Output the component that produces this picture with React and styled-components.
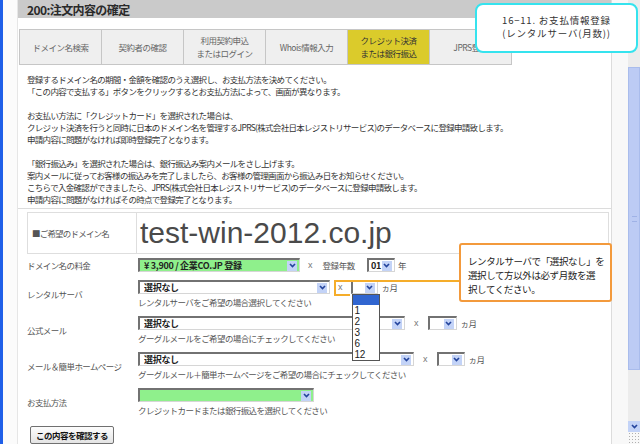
import React from "react";
import styled, { createGlobalStyle } from "styled-components";

const GlobalStyle = createGlobalStyle`
  html, body {
    margin: 0;
    padding: 0;
    background: #fff;
  }
  body {
    font-family: "Noto Sans CJK JP", "Liberation Sans", sans-serif;
  }
`;

const Page = styled.div`
  position: relative;
  display: flex;
  width: 640px;
  height: 444px;
  overflow: hidden;
  background: #fff;
  font-family: "Noto Sans CJK JP", "Liberation Sans", sans-serif;
`;

const BlueEdge = styled.div`
  width: 3px;
  flex: 0 0 3px;
  background: #1f5fe8;
`;

const Gutter = styled.div`
  flex: 0 0 15px;
  background: #fbfbfb;
  box-sizing: border-box;
  border-right: 1px solid #e6e6e6;
`;

const Panel = styled.div`
  flex: 0 0 594px;
  display: flex;
  flex-direction: column;
  box-sizing: border-box;
  border-right: 1px solid #dcdcdc;
`;

const Header = styled.div`
  height: 23px;
  background: #cacaca;
  padding-left: 9px;
  display: flex;
  align-items: center;
  font-size: 12px;
  font-weight: 700;
  letter-spacing: -0.6px;
  color: #2a2a2a;
`;

const TabRow = styled.div`
  display: flex;
  margin: 11px 0 0 1px;
`;

const Tab = styled.div`
  width: 83px;
  height: 36px;
  box-sizing: border-box;
  margin-left: -1px;
  border: 1px solid #c6c6c6;
  background: ${(p) => (p.$active ? "#dbcb2b" : "#efefef")};
  color: ${(p) => (p.$active ? "#333" : "#666")};
  display: flex;
  flex-direction: column;
  align-items: center;
  justify-content: center;
  font-size: 8.5px;
  line-height: 13px;
  letter-spacing: -0.5px;
  &:first-child {
    margin-left: 0;
  }
`;

const Notes = styled.div`
  padding: 8px 9px 3px;
  font-size: 8.5px;
  line-height: 12px;
  letter-spacing: -0.7px;
  color: #333;
  white-space: nowrap;
  p {
    margin: 0 0 12px;
  }
  p:last-child {
    margin: 0;
  }
`;

const FormSection = styled.div`
  border-top: 1px solid #dcdcdc;
  padding: 3px 2px 0 9px;
`;

const DomainBox = styled.div`
  display: flex;
  height: 42px;
  box-sizing: border-box;
  border: 1px solid #dedede;
`;

const DomainLabel = styled.div`
  width: 109px;
  box-sizing: border-box;
  border-right: 1px solid #dedede;
  padding-left: 4px;
  display: flex;
  align-items: center;
  font-size: 8.5px;
  letter-spacing: -0.8px;
  color: #555;
`;

const DomainName = styled.div`
  padding-left: 3px;
  display: flex;
  align-items: center;
  font-family: "Liberation Sans", sans-serif;
  font-size: 30px;
  color: #4a4a4a;
  letter-spacing: 0;
`;

const FieldRow = styled.div`
  display: grid;
  grid-template-columns: 111px 1fr;
  padding: 4px 0;
`;

const FieldLabel = styled.div`
  align-self: center;
  font-size: 8.5px;
  letter-spacing: -0.6px;
  color: #555;
  white-space: nowrap;
`;

const FieldBody = styled.div`
  display: flex;
  flex-direction: column;
  gap: 2px;
`;

const ControlLine = styled.div`
  display: flex;
  align-items: center;
  height: 14px;
`;

const Select = styled.div`
  position: relative;
  display: flex;
  align-items: center;
  width: ${(p) => p.$w}px;
  height: 14px;
  box-sizing: border-box;
  background: ${(p) => (p.$green ? "#8ff08c" : "#fff")};
  border-top: 2px solid #727272;
  border-left: 2px solid #727272;
  border-right: 1px solid #d6d6d6;
  border-bottom: 1px solid #d6d6d6;
  padding-left: ${(p) => (p.$tight ? 2 : 4)}px;
  font-size: 9px;
  font-weight: 700;
  letter-spacing: -0.3px;
  color: #222;
`;

const SelectText = styled.span`
  flex: 1;
  white-space: nowrap;
  overflow: hidden;
  line-height: 12px;
`;

const ArrowBox = styled.span`
  width: 10px;
  height: 10px;
  flex: 0 0 10px;
  margin-right: 2px;
  background: #c3d3f7;
  display: flex;
  align-items: center;
  justify-content: center;
`;

const Times = styled.span`
  margin: 0 ${(p) => p.$gap || 9}px;
  font-family: "Liberation Sans", sans-serif;
  font-size: 9px;
  color: #777;
`;

const Unit = styled.span`
  margin-left: ${(p) => p.$gap ?? 4}px;
  margin-right: ${(p) => p.$after || 0}px;
  font-size: 8.5px;
  letter-spacing: -0.4px;
  color: #555;
  white-space: nowrap;
`;

const Helper = styled.div`
  font-size: 8.5px;
  line-height: 12px;
  letter-spacing: -0.6px;
  color: #555;
  white-space: nowrap;
`;

const Dropdown = styled.div`
  position: absolute;
  top: 12px;
  left: -1px;
  width: 28px;
  box-sizing: border-box;
  border: 1px solid #555;
  background: #fff;
  z-index: 3;
`;

const DropItem = styled.div`
  height: ${(p) => (p.$selected ? 10 : 11)}px;
  line-height: 11px;
  padding-left: 2px;
  font-family: "Liberation Sans", sans-serif;
  font-size: 10px;
  font-weight: 400;
  color: #222;
  background: ${(p) => (p.$selected ? "#3065d0" : "#fff")};
`;

const ConfirmButton = styled.button`
  margin: 2px 0 0 3px;
  width: 84px;
  height: 18px;
  padding: 0;
  border: 1px solid #707070;
  border-radius: 2px;
  background: linear-gradient(#fdfdfd, #e4e4e4);
  font-family: "Noto Sans CJK JP", sans-serif;
  font-size: 8.5px;
  font-weight: 700;
  letter-spacing: -0.5px;
  color: #111;
  text-align: center;
`;

const ScrollBar = styled.div`
  flex: 1;
  display: flex;
  flex-direction: column;
  align-items: flex-end;
  background: #f8f8f8;
`;

const Track = styled.div`
  width: 12px;
  height: ${(p) => p.$h || 0}px;
  flex: ${(p) => (p.$fill ? "1" : "0 0 auto")};
  background: #ececec;
`;

const Thumb = styled.div`
  width: 12px;
  height: 303px;
  box-sizing: border-box;
  border: 1px solid #a9bcec;
  background: #bccbf4;
  display: flex;
  align-items: center;
  justify-content: center;
  &::after {
    content: "";
    width: 5px;
    height: 4px;
    border-top: 1px solid #9fb2e6;
    border-bottom: 1px solid #9fb2e6;
  }
`;

const ScrollArrow = styled.div`
  width: 12px;
  height: 11px;
  background: #c3d3f7;
  display: flex;
  align-items: center;
  justify-content: center;
`;

const Grip = styled.div`
  width: 12px;
  height: 12px;
  background: radial-gradient(circle, #b0b0b0 0.7px, transparent 1px) 0 0 / 3px 3px;
`;

const Callout = styled.div`
  position: absolute;
  left: ${(p) => p.$x}px;
  top: ${(p) => p.$y}px;
  width: ${(p) => p.$w}px;
  height: ${(p) => p.$h}px;
  box-sizing: border-box;
  background: #fff;
  border: 2px solid ${(p) => p.$color};
  border-radius: ${(p) => p.$r}px;
  z-index: 4;
`;

const CalloutTitle = styled.div`
  padding-top: 9px;
  display: flex;
  flex-direction: column;
  align-items: center;
  font-size: 9.5px;
  line-height: 13px;
  letter-spacing: 0.8px;
  color: #333;
  white-space: nowrap;
`;

const CalloutText = styled.div`
  padding: 9px 0 0 7px;
  font-size: 9.5px;
  line-height: 14px;
  letter-spacing: -0.4px;
  color: #222;
  white-space: nowrap;
`;

const Connector = styled.svg`
  position: absolute;
  left: 0;
  top: 0;
  pointer-events: none;
  z-index: 2;
`;

const Chevron = ({ color = "#24449c" }) => (
  <svg width="7" height="5" viewBox="0 0 7 5">
    <path d="M1 1 L3.5 3.6 L6 1" stroke={color} strokeWidth="1.6" fill="none" />
  </svg>
);

const Dropdownselect = ({ w, green, tight, value, children }) => (
  <Select $w={w} $green={green} $tight={tight}>
    <SelectText>{value}</SelectText>
    <ArrowBox>
      <Chevron />
    </ArrowBox>
    {children}
  </Select>
);

const tabs = [
  { lines: ["ドメイン名検索"] },
  { lines: ["契約者の確認"] },
  { lines: ["利用契約申込", "またはログイン"] },
  { lines: ["Whois情報入力"] },
  { lines: ["クレジット決済", "または銀行振込"], active: true },
  { lines: ["JPRS登録"] },
];

const monthOptions = ["", "1", "2", "3", "6", "12"];

export default function App() {
  return (
    <>
      <GlobalStyle />
      <Page>
        <BlueEdge />
        <Gutter />
        <Panel>
          <Header>200:注文内容の確定</Header>
          <TabRow>
            {tabs.map((t, i) => (
              <Tab key={i} $active={t.active}>
                {t.lines.map((l) => (
                  <span key={l}>{l}</span>
                ))}
              </Tab>
            ))}
          </TabRow>
          <Notes>
            <p>
              登録するドメイン名の期間・金額を確認のうえ選択し、お支払方法を決めてください。
              <br />
              「この内容で支払する」ボタンをクリックするとお支払方法によって、画面が異なります。
            </p>
            <p>
              お支払い方法に「クレジットカード」を選択された場合は、
              <br />
              クレジット決済を行うと同時に日本のドメイン名を管理するJPRS(株式会社日本レジストリサービス)のデータベースに登録申請致します。
              <br />
              申請内容に問題がなければ即時登録完了となります。
            </p>
            <p>
              「銀行振込み」を選択された場合は、銀行振込み案内メールをさし上げます。
              <br />
              案内メールに従ってお客様の振込みを完了しましたら、お客様の管理画面から振込み日をお知らせください。
              <br />
              こちらで入金確認ができましたら、JPRS(株式会社日本レジストリサービス)のデータベースに登録申請致します。
              <br />
              申請内容に問題がなければその時点で登録完了となります。
            </p>
          </Notes>
          <FormSection>
            <DomainBox>
              <DomainLabel>■ご希望のドメイン名</DomainLabel>
              <DomainName>test-win-2012.co.jp</DomainName>
            </DomainBox>

            <FieldRow>
              <FieldLabel>ドメイン名の料金</FieldLabel>
              <FieldBody>
                <ControlLine>
                  <Dropdownselect w={162} green value="¥ 3,900 / 企業CO.JP 登録" />
                  <Times $gap={8}>x</Times>
                  <Unit $gap={2} $after={12}>
                    登録年数
                  </Unit>
                  <Dropdownselect w={28} tight value="01" />
                  <Unit $gap={3}>年</Unit>
                </ControlLine>
              </FieldBody>
            </FieldRow>

            <FieldRow>
              <FieldLabel>レンタルサーバ</FieldLabel>
              <FieldBody>
                <ControlLine>
                  <Dropdownselect w={192} value="選択なし" />
                  <Times $gap={8}>x</Times>
                  <Dropdownselect w={27} value="">
                    <Dropdown>
                      {monthOptions.map((m, i) => (
                        <DropItem key={i} $selected={i === 0}>
                          {m}
                        </DropItem>
                      ))}
                    </Dropdown>
                  </Dropdownselect>
                  <Unit>ヵ月</Unit>
                </ControlLine>
                <Helper>レンタルサーバをご希望の場合選択してください</Helper>
              </FieldBody>
            </FieldRow>

            <FieldRow>
              <FieldLabel>公式メール</FieldLabel>
              <FieldBody>
                <ControlLine>
                  <Dropdownselect w={267} value="選択なし" />
                  <Times $gap={9}>x</Times>
                  <Dropdownselect w={29} value="" />
                  <Unit>ヵ月</Unit>
                </ControlLine>
                <Helper>グーグルメールをご希望の場合にチェックしてください</Helper>
              </FieldBody>
            </FieldRow>

            <FieldRow>
              <FieldLabel>メール＆簡単ホームページ</FieldLabel>
              <FieldBody>
                <ControlLine>
                  <Dropdownselect w={276} value="選択なし" />
                  <Times $gap={9}>x</Times>
                  <Dropdownselect w={28} value="" />
                  <Unit>ヵ月</Unit>
                </ControlLine>
                <Helper>
                  グーグルメール＋簡単ホームページをご希望の場合にチェックしてください
                </Helper>
              </FieldBody>
            </FieldRow>

            <FieldRow>
              <FieldLabel>お支払方法</FieldLabel>
              <FieldBody>
                <ControlLine>
                  <Dropdownselect w={176} green value="" />
                </ControlLine>
                <Helper>クレジットカードまたは銀行振込を選択してください</Helper>
              </FieldBody>
            </FieldRow>

            <ConfirmButton>この内容を確認する</ConfirmButton>
          </FormSection>
        </Panel>
        <ScrollBar>
          <Track $h={67} />
          <Thumb />
          <Track $fill />
          <ScrollArrow>
            <Chevron />
          </ScrollArrow>
          <Grip />
        </ScrollBar>

        <Callout $x={475} $y={3} $w={163} $h={50} $color="#35e3ee" $r={8}>
          <CalloutTitle>
            <span>16−11. お支払情報登録</span>
            <span>(レンタルサーバ(月数))</span>
          </CalloutTitle>
        </Callout>

        <Connector width="640" height="444">
          <polyline
            points="460,281 335,281 335,295 350,295"
            fill="none"
            stroke="#f5ad2a"
            strokeWidth="2"
          />
        </Connector>

        <Callout $x={459} $y={243} $w={153} $h={59} $color="#f39a3c" $r={3}>
          <CalloutText>
            レンタルサーバで「選択なし」を
            <br />
            選択して方以外は必ず月数を選
            <br />
            択してください。
          </CalloutText>
        </Callout>
      </Page>
    </>
  );
}
